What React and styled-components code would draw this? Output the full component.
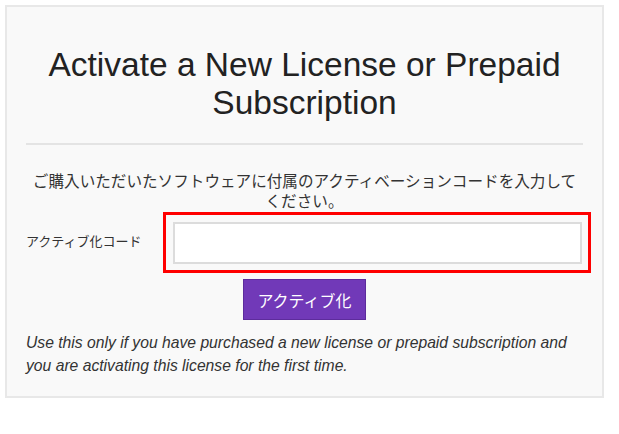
import React from 'react';
import styled, { createGlobalStyle } from 'styled-components';

const GlobalStyle = createGlobalStyle`
  body {
    margin: 0;
    padding: 5px;
    background: #ffffff;
    font-family: "Liberation Sans", Arial, "Noto Sans CJK JP", sans-serif;
  }
`;

// panel gris con borde claro
const Panel = styled.div`
  width: 599px;
  box-sizing: border-box;
  background: #f9f9f9;
  border: 2px solid #e8e8e8;
  padding: 39px 19px 19px;
  display: flex;
  flex-direction: column;
`;

const Title = styled.h1`
  margin: 0;
  font-size: 33.5px;
  line-height: 38px;
  font-weight: 400;
  color: #222;
  text-align: center;
`;

const Divider = styled.hr`
  margin: 21px 0 0;
  border: none;
  border-top: 2px solid #e4e4e4;
`;

const Intro = styled.p`
  margin: 25px 0 0;
  font-family: "Noto Sans CJK JP", sans-serif;
  font-size: 15.6px;
  line-height: 20px;
  color: #333;
  text-align: center;
`;

const FormRow = styled.div`
  display: flex;
  align-items: center;
  margin: 2px -8px 0 0;
`;

const Label = styled.label`
  width: 137px;
  flex-shrink: 0;
  margin-bottom: 5px;
  font-family: "Noto Sans CJK JP", sans-serif;
  font-size: 13px;
  color: #333;
`;

// recuadro rojo que marca el campo
const Highlight = styled.div`
  width: 428px;
  box-sizing: border-box;
  border: 3px solid #ff0000;
  padding: 7px 6px 6px 7px;
`;

const CodeInput = styled.input`
  display: block;
  width: 100%;
  height: 42px;
  box-sizing: border-box;
  border: 2px solid #dcdcdc;
  background: #fff;
  outline: none;
`;

const ButtonRow = styled.div`
  display: flex;
  justify-content: center;
  margin-top: 6px;
`;

const ActivateButton = styled.button`
  height: 41px;
  padding: 0 13px;
  background: #7139b8;
  border: 1px solid #5d2c9c;
  color: #fff;
  font-family: "Noto Sans CJK JP", sans-serif;
  font-size: 16px;
  cursor: pointer;
`;

const Note = styled.p`
  margin: 11px 0 0;
  font-style: italic;
  font-size: 15.7px;
  line-height: 23px;
  color: #333;
`;

export default function App() {
  return (
    <>
      <GlobalStyle />
      <Panel>
        <Title>Activate a New License or Prepaid Subscription</Title>
        <Divider />
        <Intro>ご購入いただいたソフトウェアに付属のアクティベーションコードを入力してください。</Intro>
        <FormRow>
          <Label htmlFor="code">アクティブ化コード</Label>
          <Highlight>
            <CodeInput id="code" type="text" />
          </Highlight>
        </FormRow>
        <ButtonRow>
          <ActivateButton>アクティブ化</ActivateButton>
        </ButtonRow>
        <Note>
          Use this only if you have purchased a new license or prepaid subscription and
          you are activating this license for the first time.
        </Note>
      </Panel>
    </>
  );
}
